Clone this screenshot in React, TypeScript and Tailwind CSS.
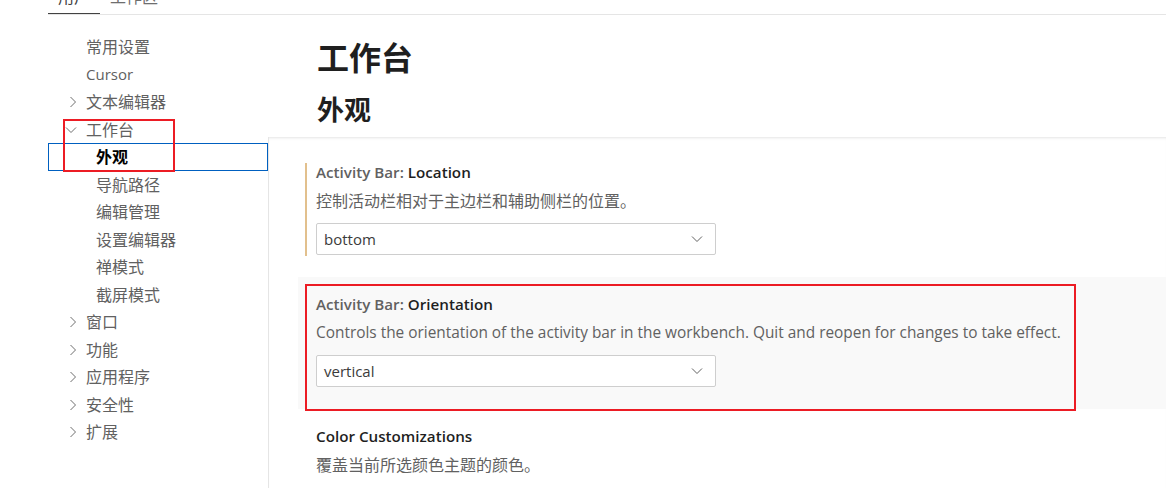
import React from 'react';

type NavItem = {
  label: string;
  level: 1 | 2;
  chevron?: 'right' | 'down';
  selected?: boolean;
  en?: boolean;
};

const navItems: NavItem[] = [
  { label: '常用设置', level: 1 },
  { label: 'Cursor', level: 1, en: true },
  { label: '文本编辑器', level: 1, chevron: 'right' },
  { label: '工作台', level: 1, chevron: 'down' },
  { label: '外观', level: 2, selected: true },
  { label: '导航路径', level: 2 },
  { label: '编辑管理', level: 2 },
  { label: '设置编辑器', level: 2 },
  { label: '禅模式', level: 2 },
  { label: '截屏模式', level: 2 },
  { label: '窗口', level: 1, chevron: 'right' },
  { label: '功能', level: 1, chevron: 'right' },
  { label: '应用程序', level: 1, chevron: 'right' },
  { label: '安全性', level: 1, chevron: 'right' },
  { label: '扩展', level: 1, chevron: 'right' },
];

const ChevronRight = () => (
  <svg width="8" height="12" viewBox="0 0 8 12" className="text-[#6e6e6e]">
    <polyline points="1.5,1 6.5,6 1.5,11" fill="none" stroke="currentColor" strokeWidth="1" />
  </svg>
);

const ChevronDown = ({ className = 'text-[#6e6e6e]' }: { className?: string }) => (
  <svg width="12" height="8" viewBox="0 0 12 8" className={className}>
    <polyline points="1,1.5 6,6.5 11,1.5" fill="none" stroke="currentColor" strokeWidth="1" />
  </svg>
);

const Select = ({ value }: { value: string }) => (
  <div className="flex h-[32px] w-[400px] items-center justify-between rounded-[2px] border border-[#cecece] bg-white pl-[7px] pr-[12px]">
    <span className="text-[15px] text-[#3b3b3b]">{value}</span>
    <ChevronDown className="text-[#616161]" />
  </div>
);

type SettingProps = {
  category?: string;
  name: string;
  description: string;
  descEn?: boolean;
  value?: string;
  focused?: boolean;
  hovered?: boolean;
  annotated?: boolean;
};

const Setting = ({ category, name, description, descEn, value, focused, hovered, annotated }: SettingProps) => (
  <div className={`relative h-[132px] pl-[7px] pt-[18px] ${hovered ? 'bg-[#f9f9f9]' : ''}`}>
    <div className={`border-l-2 pb-[1px] pl-[9px] ${focused ? 'border-[#e2c08d]' : 'border-transparent'}`}>
      <div className="text-[15.2px] font-semibold leading-[18px]">
        {category && <span className="text-[#616161]">{category}: </span>}
        <span className="text-[#1f1f1f]">{name}</span>
      </div>
      <div className={`mt-[10px] leading-[20px] text-[#616161] ${descEn ? 'text-[15.4px]' : 'text-[16px]'}`}>
        {description}
      </div>
      {value && (
        <div className="mt-[12px]">
          <Select value={value} />
        </div>
      )}
    </div>
    {annotated && (
      <div className="pointer-events-none absolute left-[7px] top-[7px] h-[127px] w-[771px] border-2 border-[#ec1c24]" />
    )}
  </div>
);

export default function App() {
  return (
    <div className="relative h-[488px] w-[1166px] overflow-hidden bg-white font-['Open_Sans','Noto_Sans_CJK_SC',sans-serif] text-[#616161]">
      {/* tabs, scrolled partly out of view */}
      <div className="ml-[48px] flex h-[15px] overflow-hidden border-b border-[#e5e5e5]">
        <div className="relative w-[52px] text-center">
          <div className="-mt-[11px] text-[16px] leading-[16px] text-[#424242]">用户</div>
          <div className="absolute bottom-0 left-0 h-px w-full bg-[#424242]" />
        </div>
        <div className="-mt-[11px] pl-[10px] text-[16px] leading-[16px] text-[#6e6e6e]">工作区</div>
      </div>

      <div className="flex h-[473px]">
        {/* sidebar tree */}
        <div className="w-[268px] shrink-0 pl-[48px] pt-[18.25px]">
          {navItems.map((item) => (
            <div
              key={item.label}
              className={`flex h-[27.5px] items-center border ${
                item.selected ? 'border-[#0060c0]' : 'border-transparent'
              }`}
            >
              <div className="flex w-[37px] shrink-0 justify-end pr-[9px]">
                {item.chevron === 'right' && <ChevronRight />}
                {item.chevron === 'down' && <ChevronDown />}
              </div>
              <span
                className={`${item.level === 2 ? 'pl-[10px]' : ''} ${item.en ? 'text-[15px]' : 'text-[16px]'} ${
                  item.selected ? 'font-bold text-black' : 'text-[#616161]'
                }`}
              >
                {item.label}
              </span>
            </div>
          ))}
        </div>

        {/* main panel */}
        <div className="flex min-w-0 flex-1 flex-col">
          <div className="h-[122px] shrink-0 pl-[49px] pt-[23px]">
            <h1 className="text-[32px] font-bold leading-[40px] text-[#1f1f1f]">工作台</h1>
            <h2 className="mt-[15px] text-[27px] font-bold leading-[34px] text-[#1f1f1f]">外观</h2>
          </div>
          <div className="flex-1 border-l border-[#e5e5e5] pl-[29px] pt-[8px] shadow-[inset_0_3px_3px_-2px_#e4e4e4]">
            <Setting
              category="Activity Bar"
              name="Location"
              description="控制活动栏相对于主边栏和辅助侧栏的位置。"
              value="bottom"
              focused
            />
            <Setting
              category="Activity Bar"
              name="Orientation"
              description="Controls the orientation of the activity bar in the workbench. Quit and reopen for changes to take effect."
              descEn
              value="vertical"
              hovered
              annotated
            />
            <Setting name="Color Customizations" description="覆盖当前所选颜色主题的颜色。" />
          </div>
        </div>
      </div>

      {/* annotation around the selected tree node */}
      <div className="pointer-events-none absolute left-[63px] top-[119px] h-[53px] w-[112px] border-2 border-[#ec1c24]" />
    </div>
  );
}
